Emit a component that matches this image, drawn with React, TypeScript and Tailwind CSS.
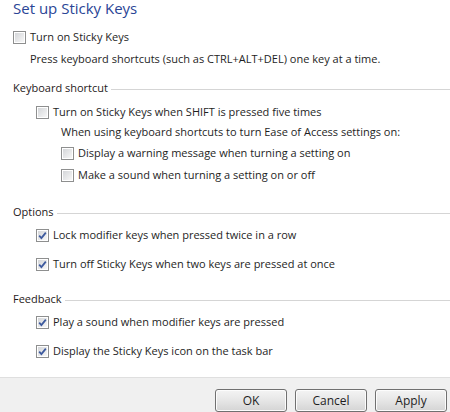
import React from "react";

const font = { fontFamily: '"Open Sans", "Noto Sans", sans-serif' };

function Box({ checked }: { checked?: boolean }) {
  return (
    <span className="relative inline-block h-[13px] w-[13px] shrink-0 border border-[#8e8f8f] bg-white">
      <span className="absolute inset-[1px] bg-gradient-to-br from-[#d4d6d9] to-[#f7f7f7]" />
      {checked && (
        <svg viewBox="0 0 11 11" className="absolute inset-0 h-[11px] w-[11px]">
          <path d="M2.2 5.6 L4.4 8 L8.8 2.6" fill="none" stroke="#3d5a9e" strokeWidth="1.8" />
        </svg>
      )}
    </span>
  );
}

function Check({ label, checked, className }: { label: string; checked?: boolean; className: string }) {
  return (
    <div className={`flex h-4 items-center ${className}`}>
      <Box checked={checked} />
      <span className="ml-[4px] whitespace-nowrap">{label}</span>
    </div>
  );
}

function Group({ title, className }: { title: string; className: string }) {
  return (
    <div className={`flex h-4 items-center pl-[13px] ${className}`}>
      <span className="whitespace-nowrap text-[#1f1a1a]">{title}</span>
      <span className="ml-[3px] mt-[2px] h-px flex-1 bg-[#d5d5d5]" />
    </div>
  );
}

export default function App() {
  return (
    <div style={font} className="flex h-[412px] w-[450px] flex-col overflow-hidden bg-white text-[11px] text-[#1e1e1e]">
      <div className="flex h-[377px] flex-col">
        <div className="h-[17px] pl-[13px] text-[15px] leading-[17px] text-[#2a4596]">Set up Sticky Keys</div>

        <Check className="mt-[12px] pl-[13px]" label="Turn on Sticky Keys" />
        <div className="mt-[6px] flex h-4 items-center whitespace-nowrap pl-[30px]">
          Press keyboard shortcuts (such as CTRL+ALT+DEL) one key at a time.
        </div>

        <Group className="mt-[13px]" title="Keyboard shortcut" />
        <Check className="mt-[8px] pl-[36px]" label="Turn on Sticky Keys when SHIFT is pressed five times" />
        <div className="mt-[4px] flex h-4 items-center whitespace-nowrap pl-[61px]">
          When using keyboard shortcuts to turn Ease of Access settings on:
        </div>
        <Check className="mt-[5px] pl-[61px]" label="Display a warning message when turning a setting on" />
        <Check className="mt-[6px] pl-[61px]" label="Make a sound when turning a setting on or off" />

        <Group className="mt-[21px]" title="Options" />
        <Check className="mt-[7px] pl-[36px]" checked label="Lock modifier keys when pressed twice in a row" />
        <Check className="mt-[13px] pl-[36px]" checked label="Turn off Sticky Keys when two keys are pressed at once" />

        <Group className="mt-[19px]" title="Feedback" />
        <Check className="mt-[7px] pl-[36px]" checked label="Play a sound when modifier keys are pressed" />
        <Check className="mt-[13px] pl-[36px]" checked label="Display the Sticky Keys icon on the task bar" />
      </div>

      <div className="flex flex-1 justify-end gap-[8px] border-t border-[#dfdfdf] bg-[#f0f0f0] pr-[3px] pt-[11px]">
        {["OK", "Cancel", "Apply"].map((b) => (
          <button
            key={b}
            type="button"
            className="h-[23px] w-[72px] rounded-[3px] border border-[#707070] bg-gradient-to-b from-[#f4f4f4] via-[#e6e6e6] to-[#d4d4d4] text-[12px] text-[#1e1e1e] shadow-[inset_0_0_0_1px_#fcfcfc]"
          >
            {b}
          </button>
        ))}
      </div>
    </div>
  );
}
